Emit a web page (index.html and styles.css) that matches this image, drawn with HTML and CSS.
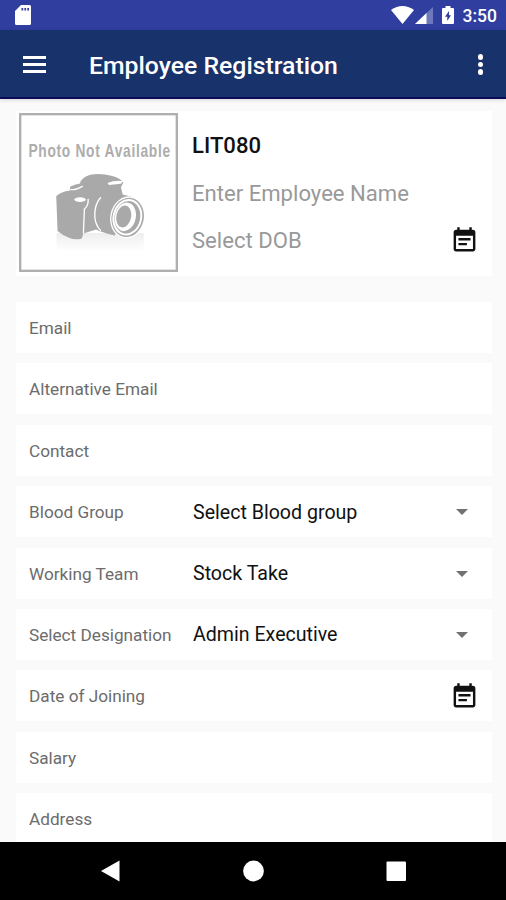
FILE: index.html
```
<!DOCTYPE html>
<html lang="en">
<head>
    <meta charset="UTF-8">
    <meta name="viewport" content="width=device-width, initial-scale=1.0">
    <title>Employee Registration</title>
    <link rel="stylesheet" href="styles.css">
</head>
<body>
    <svg class="sprite" aria-hidden="true">
        <symbol id="icon-event" viewBox="0 0 24 24">
            <path d="M17 10H7v2h10v-2zm2-7h-1V1h-2v2H8V1H6v2H5c-1.11 0-1.99.9-1.99 2L3 19c0 1.1.89 2 2 2h14c1.1 0 2-.9 2-2V5c0-1.1-.9-2-2-2zm0 16H5V8h14v11zm-5-5H7v2h7v-2z"/>
        </symbol>
    </svg>

    <div class="status-bar">
        <svg class="sd-card" viewBox="0 0 16 20">
            <path fill-rule="evenodd" d="M6 0h8.500Q16 0 16 1.500v17Q16 20 14.500 20h-13Q0 20 0 18.500V6zM6.500 3v2.500h1.700V3zM9.400 3v2.500h1.700V3zM12.300 3v2.500h1.700V3z"/>
        </svg>
        <div class="status-icons">
            <svg class="wifi" viewBox="0 0 23 18"><path d="M0 4Q11.500-4 23 4L11.500 18z"/></svg>
            <svg class="signal" viewBox="0 0 18 17">
                <path opacity=".3" d="M18 0v17H0z"/>
                <path d="M11.500 6v11H0z"/>
            </svg>
            <svg class="battery" viewBox="0 0 12 18">
                <path fill-rule="evenodd" d="M3.500 0h5v2H11q1 0 1 1v14q0 1-1 1H1q-1 0-1-1V3q0-1 1-1h2.500zM7 5L3 10.800h2.300V15L9 9.200H7z"/>
            </svg>
            <span class="clock">3:50</span>
        </div>
    </div>

    <header class="toolbar">
        <div class="menu-btn"><span></span><span></span><span></span></div>
        <h1>Employee Registration</h1>
        <div class="more-btn"><span></span><span></span><span></span></div>
    </header>

    <main class="content">
        <section class="profile">
            <svg class="photo" viewBox="0 0 474 474">
                <defs>
                    <linearGradient id="reflection" x1="0" y1="0" x2="0" y2="1">
                        <stop offset="0" stop-color="#eee"/>
                        <stop offset="1" stop-color="#fff"/>
                    </linearGradient>
                </defs>
                <rect class="frame" x="3.500" y="3.500" width="467" height="467"/>
                <text transform="translate(28 131) scale(.76 1)" textLength="556">Photo Not Available</text>
                <path fill="url(#reflection)" d="M112 358h260v54H112z"/>
                <!-- body -->
                <path d="M111 248Q126 234 151 232L153 219Q170 211 182 210Q184 193 212 184Q244 178 275 187Q304 194 311 208L304 221L309 243L336 250L286 365Q244 355 230 347L192 359L187 374Q167 380 149 372Q128 364 115 352Z"/>
                <path class="line" d="M153 228Q169 231 190 218M206 256Q208 276 195 286L192 359"/>
                <path fill="#fff" d="M264 209Q285 200 311 203L304 211L268 215z"/>
                <ellipse fill="#fff" cx="182" cy="258" rx="17" ry="7"/>
                <path class="line" d="M244 251Q224 273 226 310Q228 335 244 351"/>
                <!-- lens -->
                <g transform="rotate(12 324 311)">
                    <ellipse fill="#fff" cx="324" cy="311" rx="52" ry="63"/>
                    <ellipse cx="324" cy="311" rx="48" ry="59"/>
                    <ellipse class="ring" cx="323" cy="311" rx="41" ry="52"/>
                    <ellipse fill="#fff" cx="317" cy="311" rx="31" ry="43"/>
                    <ellipse cx="312" cy="311" rx="22" ry="33"/>
                </g>
            </svg>
            <div class="profile-fields">
                <div class="profile-row emp-id">LIT080</div>
                <div class="profile-row">Enter Employee Name</div>
                <div class="profile-row">Select DOB <svg class="event"><use href="#icon-event"/></svg></div>
            </div>
        </section>

        <div class="form">
            <div class="row"><label>Email</label></div>
            <div class="row"><label>Alternative Email</label></div>
            <div class="row"><label>Contact</label></div>
            <div class="row">
                <label>Blood Group</label>
                <div class="spinner">Select Blood group</div>
            </div>
            <div class="row">
                <label>Working Team</label>
                <div class="spinner">Stock Take</div>
            </div>
            <div class="row">
                <label>Select Designation</label>
                <div class="spinner">Admin Executive</div>
            </div>
            <div class="row"><label>Date of Joining</label><svg class="event"><use href="#icon-event"/></svg></div>
            <div class="row"><label>Salary</label></div>
            <div class="row"><label>Address</label></div>
        </div>
    </main>

    <nav class="nav-bar">
        <svg viewBox="0 0 22 22"><path d="M2 11L20.500.500v21z"/></svg>
        <svg viewBox="0 0 22 22"><circle cx="11.500" cy="11" r="10.400"/></svg>
        <svg viewBox="0 0 22 22"><rect x="1.500" y="1.500" width="19.500" height="19.500" rx="1"/></svg>
    </nav>
</body>
</html>
```
FILE: styles.css
```
* {
    box-sizing: border-box;
}

body {
    margin: 0;
    height: 900px;
    display: flex;
    flex-direction: column;
    overflow: hidden;
    font-family: Roboto, "Liberation Sans", sans-serif;
    background: #fafafa;
    color: #111;
}

svg {
    display: block;
    flex: none;
}

.sprite {
    display: none;
}

.status-bar {
    flex: none;
    height: 30px;
    padding: 0 9px 0 15px;
    display: flex;
    justify-content: space-between;
    align-items: center;
    background: #303f9f;
    color: #fff;
    fill: #fff;
}

.sd-card {
    width: 16px;
    height: 20px;
}

.status-icons {
    display: flex;
    align-items: center;
}

.wifi {
    width: 23px;
    height: 18px;
}

.signal {
    width: 18px;
    height: 17px;
    margin-left: 1px;
}

.battery {
    width: 12px;
    height: 18px;
    margin: 0 9px;
}

.clock {
    font-size: 17.5px;
    font-weight: 500;
    line-height: 20px;
    padding-top: 2px;
}

.toolbar {
    flex: none;
    height: 69px;
    padding: 0 23px;
    display: flex;
    align-items: center;
    background: #18326c;
    border-bottom: 2px solid #0b0b58;
    box-shadow: 0 1px 4px rgba(0,0,0,0.15);
    color: #fff;
    z-index: 1;
}

.menu-btn {
    width: 23px;
    padding-top: 1px;
    display: grid;
    gap: 4px;
}

.menu-btn span {
    height: 3px;
    background: #fff;
}

.toolbar h1 {
    flex: 1;
    margin: 4px 0 0 43px;
    font-size: 24.8px;
    font-weight: 500;
}

.more-btn {
    padding-top: 2px;
    display: grid;
    gap: 2px;
}

.more-btn span {
    width: 5.5px;
    height: 5.5px;
    border-radius: 50%;
    background: #fff;
}

.content {
    flex: 1;
    min-height: 0;
    overflow: hidden;
    padding: 12px 14px 0 16px;
}

.profile {
    height: 165px;
    padding: 2px 0 0 3px;
    display: flex;
    background: #fff;
}

.photo {
    width: 159px;
    height: 159px;
    fill: #a9a9a9;
}

.photo .frame {
    fill: #fff;
    stroke: #afafaf;
    stroke-width: 7;
}

.photo text {
    font-family: "Liberation Sans", sans-serif;
    font-size: 54px;
    font-weight: bold;
    fill: #adadad;
}

.photo .line {
    fill: none;
    stroke: #fff;
    stroke-width: 4;
}

.photo .ring {
    fill: none;
    stroke: #fff;
    stroke-width: 6;
}

.profile-fields {
    flex: 1;
    padding: 8px 13px 0 14px;
    font-size: 22.1px;
    color: #999;
}

.profile-row {
    height: 47.7px;
    display: flex;
    align-items: center;
    justify-content: space-between;
}

.emp-id {
    font-weight: 500;
    color: #111;
}

.event {
    width: 29px;
    height: 29px;
    fill: #111;
}

.form {
    margin-top: 26px;
    display: grid;
    gap: 10.4px;
}

.row {
    height: 51px;
    padding: 2px 13px 1px;
    display: flex;
    align-items: center;
    background: #fff;
}

.row label {
    width: 164px;
    font-size: 17.2px;
    color: #6c6c6c;
    white-space: nowrap;
}

.row .event {
    margin-left: auto;
}

.spinner {
    flex: 1;
    display: flex;
    align-items: center;
    justify-content: space-between;
    padding-right: 11px;
    font-size: 19.6px;
}

.spinner::after {
    content: "";
    border: 6px solid transparent;
    border-top-color: #717171;
    border-bottom: 0;
}

.nav-bar {
    flex: none;
    height: 58px;
    padding: 0 99px;
    display: flex;
    align-items: center;
    justify-content: space-between;
    background: #000;
    fill: #fff;
}

.nav-bar svg {
    width: 22px;
    height: 22px;
}
```
